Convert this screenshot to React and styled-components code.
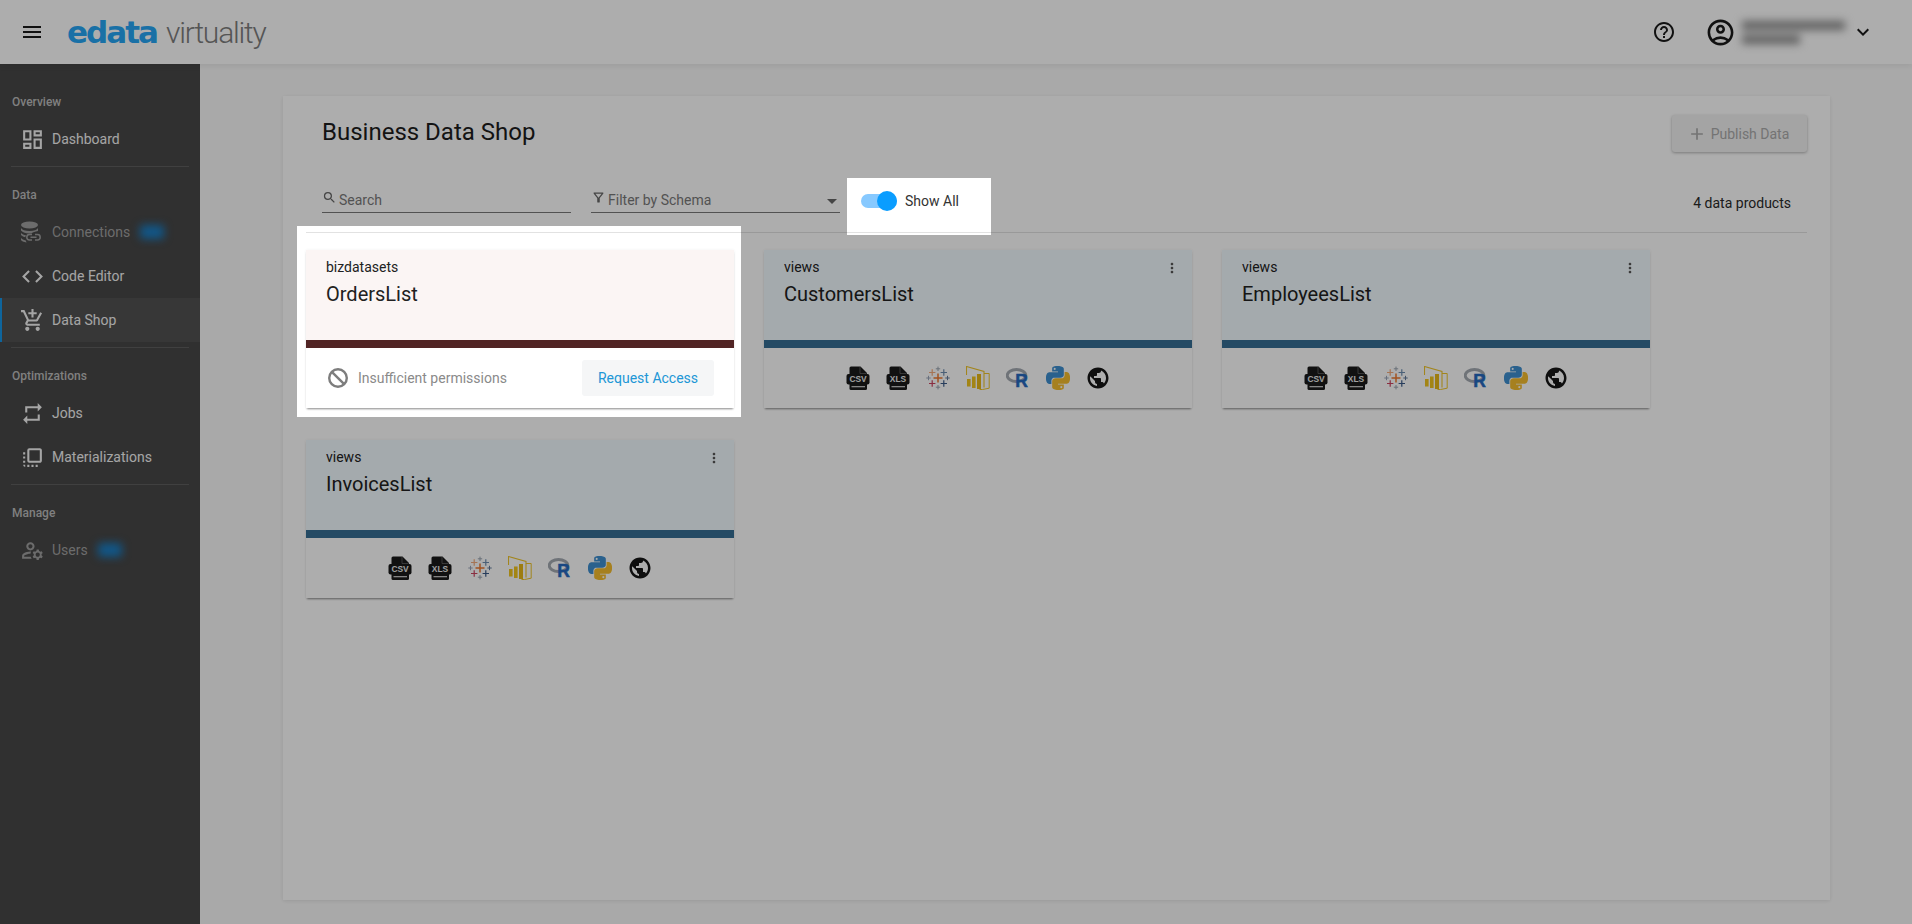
import React from "react";
import styled, { createGlobalStyle } from "styled-components";
import {
  MdMenu,
  MdHelpOutline,
  MdOutlineAccountCircle,
  MdKeyboardArrowDown,
  MdOutlineDashboard,
  MdCode,
  MdOutlineAddShoppingCart,
  MdRepeat,
  MdFlipToFront,
  MdOutlineManageAccounts,
  MdSearch,
  MdOutlineFilterAlt,
  MdArrowDropDown,
  MdAdd,
  MdMoreVert,
} from "react-icons/md";

const GlobalStyle = createGlobalStyle`
  html, body {
    margin: 0;
    height: 100%;
    overflow: hidden;
    font-family: Roboto, "Liberation Sans", sans-serif;
    background: #fafafa;
  }
  * { box-sizing: border-box; }
`;

const ConnectionsIcon = () => (
  <svg width="22" height="22" viewBox="0 0 22 22" fill="currentColor">
    <ellipse cx="9.500" cy="4" rx="8.500" ry="3.400" />
    <path d="M1 7c1 2 4 3 8.500 3S17 9 18 7v3c-3 .6-5 1-6.500 2.500H9C5 12.500 2 11 1 9.500V7zM1 12c1 1.300 3 2 5 2.300-.5.800-.6 1.400-.6 2C4 16 2 15.200 1 14v-2zM1 17c1 1.300 2.500 2 4.800 2.400l.7 2C3.500 21 1.500 20 1 19v-2z" />
    <path
      d="M12 13.500H9.500a2.700 2.700 0 0 0 0 5.400H12M15 13.500h2.500a2.700 2.700 0 0 1 0 5.400H15M10.500 16.200h6"
      fill="none"
      stroke="currentColor"
      strokeWidth="1.500"
    />
  </svg>
);

const BlockedIcon = () => (
  <svg width="24" height="24" viewBox="0 0 24 24" fill="none" stroke="currentColor" strokeWidth="2.400">
    <circle cx="12" cy="12" r="8.800" />
    <path d="M5.800 5.800l12.400 12.400" />
  </svg>
);

const FileIcon = ({ label }) => (
  <svg width="24" height="24" viewBox="0 0 24 24">
    <path d="M3.500 2a1.500 1.500 0 0 1 1.500-1.500h9.500L21 7v4H3.500z" fill="#1a1a1a" />
    <path d="M14 1v6.500h6.500" fill="none" stroke="#8a8a8a" strokeWidth="0.500" />
    <rect x="0.500" y="8" width="23" height="10.500" rx="2" fill="#1a1a1a" />
    <path d="M3.500 17H21v5.500a1.500 1.500 0 0 1-1.500 1.500H5a1.500 1.500 0 0 1-1.500-1.500z" fill="#1a1a1a" />
    <rect x="5.500" y="20" width="13.500" height="1.300" fill="#c4c4c4" />
    <text
      x="12"
      y="16.400"
      textAnchor="middle"
      fontFamily="Liberation Sans, sans-serif"
      fontWeight="700"
      fontSize="8.400"
      fill="#ececec"
    >
      {label}
    </text>
  </svg>
);

const Cross = ({ x, y, r, color, w = 1.200 }) => (
  <path
    d={`M${x - r} ${y}H${x + r}M${x} ${y - r}V${y + r}`}
    stroke={color}
    strokeWidth={w}
    fill="none"
  />
);

const TableauIcon = () => (
  <svg width="24" height="24" viewBox="0 0 24 24">
    <Cross x={12} y={12} r={4.500} color="#ee7a2f" w={1.500} />
    <Cross x={12} y={2.800} r={2.200} color="#9aa4b0" w={1} />
    <Cross x={12} y={21.200} r={2.200} color="#9aa4b0" w={1} />
    <Cross x={6.200} y={6.500} r={3.200} color="#f4ab7c" />
    <Cross x={17.800} y={6.500} r={3.200} color="#6d8db0" />
    <Cross x={6.200} y={17.500} r={3.200} color="#cc4460" />
    <Cross x={17.800} y={17.500} r={3.200} color="#3a5a88" />
    <Cross x={2.500} y={12} r={2.200} color="#9aa4b8" w={1} />
    <Cross x={21.500} y={12} r={2.200} color="#60789a" w={1} />
  </svg>
);

const PowerBiIcon = () => (
  <svg width="24" height="24" viewBox="0 0 24 24">
    <path d="M0.500 9V0.500L18 5.500V21.500" fill="none" stroke="#efc52c" strokeWidth="1.100" />
    <path d="M18 7.500h5.200v14.700l-6.700 1.300h-3" fill="none" stroke="#efc52c" strokeWidth="1" />
    <rect x="1" y="13" width="3.600" height="7.500" fill="#f0c420" />
    <rect x="6" y="10.500" width="3.600" height="11.500" fill="#f0c420" />
    <rect x="11" y="8" width="4" height="15" fill="#e8b818" />
  </svg>
);

const RIcon = () => (
  <svg width="24" height="24" viewBox="0 0 24 24">
    <ellipse cx="10.500" cy="9.500" rx="9.300" ry="6" fill="none" stroke="#a4aab2" strokeWidth="3" />
    <text
      x="15.500"
      y="20.500"
      textAnchor="middle"
      fontFamily="Liberation Sans, sans-serif"
      fontWeight="700"
      fontSize="17.500"
      fill="#2669c0"
      stroke="#2669c0"
      strokeWidth="0.500"
    >
      R
    </text>
  </svg>
);

const PythonIcon = () => (
  <svg width="24" height="24" viewBox="0 0 24 24" fillRule="evenodd">
    <path
      fill="#3f8fd0"
      d="M14.25.18l.9.2.73.26.59.3.45.32.34.34.25.34.16.33.1.3.04.26.02.2-.01.13V8.5l-.05.63-.13.55-.21.46-.26.38-.3.31-.33.25-.35.19-.35.14-.33.1-.3.07-.26.04-.21.02H8.77l-.69.05-.59.14-.5.22-.41.27-.33.32-.27.35-.2.36-.15.37-.1.35-.07.32-.04.27-.02.21v3.06H3.17l-.21-.03-.28-.07-.32-.12-.35-.18-.36-.26-.36-.36-.35-.46-.32-.59-.28-.73-.21-.88-.14-1.05-.05-1.23.06-1.22.16-1.04.24-.87.32-.71.36-.57.4-.44.42-.33.42-.24.4-.16.36-.1.32-.05.24-.01h.16l.06.01h8.16v-.83H6.18l-.01-2.75-.02-.37.05-.34.11-.31.17-.28.25-.26.31-.23.38-.2.44-.18.51-.15.58-.12.64-.1.71-.06.77-.04.84-.02 1.27.05zM7.950 2.160l-.23.33-.08.41.08.41.23.34.33.22.41.09.41-.09.33-.22.23-.34.08-.41-.08-.41-.23-.33-.33-.22-.41-.09-.41.09z"
    />
    <path
      fill="#f5bd2e"
      d="M21.040 6.110l.28.06.32.12.35.18.36.27.36.35.35.47.32.59.28.73.21.88.14 1.04.05 1.23-.06 1.23-.16 1.04-.24.86-.32.71-.36.57-.4.45-.42.33-.42.24-.4.16-.36.09-.32.05-.24.02-.16-.01h-8.220v.82h5.840l.01 2.76.02.36-.05.34-.11.31-.17.29-.25.25-.31.24-.38.2-.44.17-.51.15-.58.13-.64.09-.71.07-.77.04-.84.01-1.27-.04-1.07-.14-.9-.2-.73-.25-.59-.3-.45-.33-.34-.34-.25-.34-.16-.33-.1-.3-.04-.25-.02-.2.01-.13v-5.340l.05-.64.13-.54.21-.46.26-.38.3-.32.33-.24.35-.2.35-.14.33-.1.3-.06.26-.04.21-.02.13-.01h5.840l.69-.05.59-.14.5-.21.41-.28.33-.32.27-.35.2-.36.15-.36.1-.35.07-.32.04-.28.02-.21V6.070h2.090l.14.010zM14.570 20.360l-.23.33-.08.41.08.41.23.33.33.23.41.08.41-.08.33-.23.23-.33.08-.41-.08-.41-.23-.33-.33-.23-.41-.08-.41.08z"
    />
  </svg>
);

const GlobeIcon = () => (
  <svg width="24" height="24" viewBox="0 0 24 24" fill="#161616">
    <path d="M12 1.500C6.200 1.500 1.500 6.200 1.500 12S6.200 22.500 12 22.500 22.500 17.800 22.500 12 17.800 1.500 12 1.500zm-1 18.430c-3.950-.49-7-3.850-7-7.930 0-.62.08-1.210.21-1.790L9 15v1c0 1.100.9 2 2 2v1.930zm6.900-2.540c-.26-.81-1-1.390-1.900-1.390h-1v-3c0-.55-.45-1-1-1H8v-2h2c.55 0 1-.45 1-1V7h2c1.100 0 2-.9 2-2v-.41c2.930 1.190 5 4.060 5 7.410 0 2.080-.8 3.970-2.100 5.390z" />
  </svg>
);

const sections = [
  { label: "Overview", items: [{ name: "Dashboard", Icon: MdOutlineDashboard }] },
  {
    label: "Data",
    items: [
      { name: "Connections", Icon: ConnectionsIcon, locked: true },
      { name: "Code Editor", Icon: MdCode },
      { name: "Data Shop", Icon: MdOutlineAddShoppingCart, active: true },
    ],
  },
  {
    label: "Optimizations",
    items: [
      { name: "Jobs", Icon: MdRepeat },
      { name: "Materializations", Icon: MdFlipToFront },
    ],
  },
  {
    label: "Manage",
    items: [{ name: "Users", Icon: MdOutlineManageAccounts, locked: true }],
    last: true,
  },
];

const products = [
  { schema: "bizdatasets", name: "OrdersList", denied: true },
  { schema: "views", name: "CustomersList" },
  { schema: "views", name: "EmployeesList" },
  { schema: "views", name: "InvoicesList" },
];

const App = () => {
  return (
    <Page>
      <GlobalStyle />
      <Header>
        <MenuButton>
          <MdMenu size={24} />
        </MenuButton>
        <Logo>
          <LogoMark>edata</LogoMark>
          <LogoWord>virtuality</LogoWord>
        </Logo>
        <HeaderRight>
          <MdHelpOutline size={24} />
          <Account>
            <MdOutlineAccountCircle size={31} />
            <BlurredName>
              <BlurLine $width={103} />
              <BlurLine $width={58} />
            </BlurredName>
            <MdKeyboardArrowDown size={24} />
          </Account>
        </HeaderRight>
      </Header>
      <Body>
        <Sidebar>
          {sections.map((section) => (
            <Section key={section.label} $last={section.last}>
              <SectionLabel>{section.label}</SectionLabel>
              {section.items.map(({ name, Icon, active, locked }) => (
                <NavItem key={name} $active={active} $locked={locked}>
                  <NavIcon>
                    <Icon size={25} />
                  </NavIcon>
                  {name}
                  {locked && <BlurChip />}
                </NavItem>
              ))}
            </Section>
          ))}
        </Sidebar>
        <Main>
          <Panel>
            <PanelHead>
              <Title>Business Data Shop</Title>
              <PublishButton disabled>
                <MdAdd size={20} />
                Publish Data
              </PublishButton>
            </PanelHead>
            <Toolbar>
              <Field>
                <MdSearch size={15} />
                <FieldText>Search</FieldText>
              </Field>
              <Field>
                <MdOutlineFilterAlt size={15} />
                <FieldText>Filter by Schema</FieldText>
                <Caret>
                  <MdArrowDropDown size={24} />
                </Caret>
              </Field>
              <ToggleWrap>
                <ToggleTrack>
                  <ToggleKnob />
                </ToggleTrack>
                Show All
              </ToggleWrap>
              <Count>4 data products</Count>
            </Toolbar>
            <CardGrid>
              {products.map((product) => (
                <Card key={product.name}>
                  <CardHead $denied={product.denied}>
                    <CardTop>
                      <Schema>{product.schema}</Schema>
                      {!product.denied && (
                        <MoreButton>
                          <MdMoreVert size={16} />
                        </MoreButton>
                      )}
                    </CardTop>
                    <ProductName>{product.name}</ProductName>
                  </CardHead>
                  <CardBar $denied={product.denied} />
                  {product.denied ? (
                    <DeniedFoot>
                      <DeniedNote>
                        <BanIcon>
                          <BlockedIcon />
                        </BanIcon>
                        Insufficient permissions
                      </DeniedNote>
                      <RequestButton>Request Access</RequestButton>
                    </DeniedFoot>
                  ) : (
                    <IconFoot>
                      <FileIcon label="CSV" />
                      <FileIcon label="XLS" />
                      <TableauIcon />
                      <PowerBiIcon />
                      <RIcon />
                      <PythonIcon />
                      <GlobeIcon />
                    </IconFoot>
                  )}
                </Card>
              ))}
            </CardGrid>
          </Panel>
        </Main>
      </Body>
      <TourOverlay />
    </Page>
  );
};

const Page = styled.div`
  display: flex;
  flex-direction: column;
  height: 100vh;
`;

const Header = styled.header`
  display: flex;
  align-items: center;
  flex: 0 0 64px;
  padding: 0 37px 0 20px;
  background: #ffffff;
  color: #1a1a1a;
  box-shadow: 0 2px 6px rgba(0, 0, 0, 0.08);
  position: relative;
`;

const MenuButton = styled.div`
  display: flex;
  width: 24px;
  height: 24px;
`;

const Logo = styled.div`
  display: flex;
  align-items: baseline;
  margin-left: 23px;
`;

const LogoMark = styled.span`
  width: 99px;
  font-family: "DejaVu Sans", sans-serif;
  font-size: 31px;
  font-weight: 700;
  line-height: 40px;
  letter-spacing: -2px;
  color: #26a6f5;
`;

const LogoWord = styled.span`
  font-size: 30px;
  font-weight: 300;
  line-height: 40px;
  letter-spacing: -1.2px;
  color: #7e7e7e;
`;

const HeaderRight = styled.div`
  display: flex;
  align-items: center;
  gap: 29px;
  margin-left: auto;
`;

const Account = styled.div`
  display: flex;
  align-items: center;
`;

const BlurredName = styled.div`
  display: flex;
  flex-direction: column;
  gap: 5px;
  width: 109px;
  margin: 0 0 0 6px;
  filter: blur(4px);
`;

const BlurLine = styled.div`
  width: ${(props) => props.$width}px;
  height: 9px;
  background: #8e8e8e;
`;

const Body = styled.div`
  display: flex;
  flex: 1;
  min-height: 0;
`;

const Sidebar = styled.nav`
  flex: 0 0 200px;
  padding-top: 10px;
  background: #474747;
`;

const Section = styled.section`
  margin: 0;
  padding-bottom: 5px;
  border-bottom: ${(props) => (props.$last ? "none" : "1px solid transparent")};
  border-image: ${(props) =>
    props.$last
      ? "none"
      : "linear-gradient(to right, transparent 12px, #5f5f5f 12px, #5f5f5f 188px, transparent 188px) 1"};
`;

const SectionLabel = styled.div`
  padding: 20px 12px 7px;
  font-size: 12px;
  font-weight: 500;
  line-height: 16px;
  color: #bdbdbd;
`;

const NavItem = styled.div`
  position: relative;
  display: flex;
  align-items: center;
  height: 44px;
  padding-left: 20px;
  font-size: 14px;
  color: ${(props) => (props.$locked ? "#a0a0a0" : "#f4f4f4")};
  background: ${(props) => (props.$active ? "#515151" : "transparent")};
  box-shadow: ${(props) => (props.$active ? "inset 2px 0 0 #1596e8" : "none")};
`;

const NavIcon = styled.span`
  display: flex;
  width: 25px;
  margin-right: 7px;
`;

const BlurChip = styled.span`
  width: 24px;
  height: 14px;
  margin-left: 10px;
  border-radius: 3px;
  background: #1a80c8;
  filter: blur(4px);
`;

const Main = styled.main`
  display: flex;
  flex: 1;
  min-width: 0;
  padding: 32px 82px 24px 83px;
`;

const Panel = styled.div`
  flex: 1;
  padding: 19px 23px 0;
  background: #ffffff;
  box-shadow: 0 1px 4px rgba(0, 0, 0, 0.1);
`;

const PanelHead = styled.div`
  display: flex;
  justify-content: space-between;
  align-items: flex-start;
  height: 37px;
  padding-left: 16px;
`;

const Title = styled.h1`
  margin: 1px 0 0;
  font-size: 24px;
  font-weight: 400;
  line-height: 32px;
  color: #1c1c1c;
`;

const PublishButton = styled.button`
  display: flex;
  align-items: center;
  justify-content: center;
  gap: 4px;
  width: 135px;
  height: 37px;
  padding: 0 3px 0 0;
  border: none;
  border-radius: 3px;
  font-family: inherit;
  font-size: 14px;
  color: #ababab;
  background: #f2f2f2;
  box-shadow: 0 1px 3px rgba(0, 0, 0, 0.3);
`;

const Toolbar = styled.div`
  display: flex;
  gap: 20px;
  height: 55px;
  margin-top: 26px;
  padding: 7px 16px 0;
  border-bottom: 1px solid #e2e2e2;
`;

const Field = styled.div`
  position: relative;
  display: flex;
  align-items: flex-start;
  width: 249px;
  height: 28px;
  padding-top: 5px;
  border-bottom: 1px solid #7a7a7a;
  color: #666666;

  & > svg {
    flex: none;
  }
`;

const FieldText = styled.span`
  margin: 2px 0 0 2px;
  font-size: 14px;
  line-height: 16px;
  color: #7a7a7a;
`;

const Caret = styled.span`
  display: flex;
  margin: -1px -4px 0 auto;
`;

const ToggleWrap = styled.div`
  display: flex;
  align-items: center;
  gap: 8px;
  height: 28px;
  margin: 2px 0 0 1px;
  font-size: 14px;
  color: #333333;
`;

const ToggleTrack = styled.span`
  display: flex;
  justify-content: flex-end;
  align-items: center;
  width: 36px;
  height: 14px;
  border-radius: 7px;
  background: #87c9ff;
`;

const ToggleKnob = styled.span`
  width: 20px;
  height: 20px;
  border-radius: 50%;
  background: #0a9dff;
`;

const Count = styled.div`
  margin: 10px 0 0 auto;
  font-size: 14px;
  line-height: 16px;
  color: #2a2a2a;
`;

const CardGrid = styled.div`
  display: grid;
  grid-template-columns: repeat(3, 428px);
  column-gap: 30px;
  row-gap: 32px;
  margin-top: 17px;
`;

const Card = styled.article`
  background: #ffffff;
  box-shadow: 0 2px 2px -1px rgba(0, 0, 0, 0.45), 0 0 3px rgba(0, 0, 0, 0.06);
`;

const CardHead = styled.div`
  height: 90px;
  padding: 7px 20px 0;
  background: ${(props) => (props.$denied ? "#fbf5f4" : "#f2fbff")};
`;

const CardTop = styled.div`
  display: flex;
  justify-content: space-between;
  align-items: center;
  height: 20px;
`;

const Schema = styled.span`
  font-size: 14px;
  line-height: 20px;
  color: #212121;
`;

const MoreButton = styled.span`
  display: flex;
  margin: 2px -8px 0 0;
  color: #555555;
`;

const ProductName = styled.div`
  margin-top: 3px;
  font-size: 20px;
  line-height: 28px;
  color: #212121;
`;

const CardBar = styled.div`
  height: 8px;
  background: ${(props) => (props.$denied ? "#512424" : "#366e94")};
`;

const DeniedFoot = styled.div`
  display: flex;
  align-items: center;
  justify-content: space-between;
  height: 60px;
  padding: 0 20px;
`;

const DeniedNote = styled.span`
  display: flex;
  align-items: center;
  gap: 8px;
  font-size: 14px;
  color: #8a8a8a;
`;

const BanIcon = styled.span`
  display: flex;
  color: #7d7d7d;
`;

const RequestButton = styled.button`
  width: 132px;
  height: 36px;
  padding: 0;
  border: none;
  border-radius: 3px;
  font-family: inherit;
  font-size: 14px;
  color: #2196d6;
  background: #f5f6f7;
`;

const IconFoot = styled.div`
  display: flex;
  align-items: center;
  justify-content: center;
  gap: 16px;
  height: 60px;
`;

const TourOverlay = styled.div`
  position: fixed;
  inset: 0;
  background: rgba(0, 0, 0, 0.32);
  clip-path: path(
    evenodd,
    "M0 0H1912V924H0Z M297 226H741V417H297Z M847 178H991V235H847Z"
  );
`;

export default App;
